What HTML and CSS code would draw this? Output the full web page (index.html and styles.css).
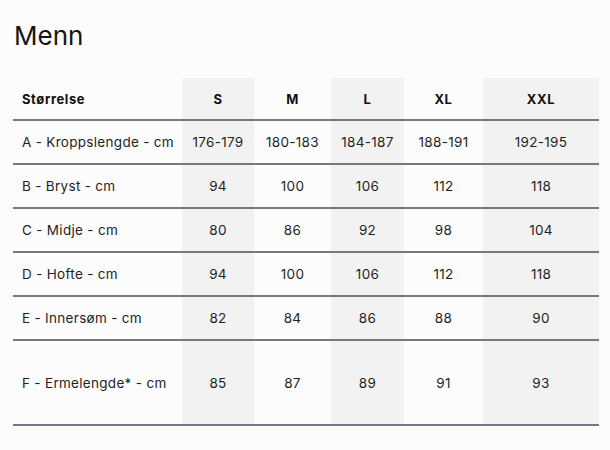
FILE: index.html
```html
<!DOCTYPE html>
<html lang="no">
<head>
<meta charset="utf-8">
<title>Menn</title>
<link rel="stylesheet" href="styles.css">
</head>
<body>
<main class="page">
  <h1 class="title">Menn</h1>
  <table class="sizes">
    <colgroup>
      <col class="c-label">
      <col class="c-s shade">
      <col class="c-m">
      <col class="c-l shade">
      <col class="c-xl">
      <col class="c-xxl shade">
    </colgroup>
    <thead>
      <tr>
        <th class="label">Størrelse</th>
        <th>S</th>
        <th>M</th>
        <th>L</th>
        <th>XL</th>
        <th>XXL</th>
      </tr>
    </thead>
    <tbody>
      <tr><td class="label">A - Kroppslengde - cm</td><td>176-179</td><td>180-183</td><td>184-187</td><td>188-191</td><td>192-195</td></tr>
      <tr><td class="label">B - Bryst - cm</td><td>94</td><td>100</td><td>106</td><td>112</td><td>118</td></tr>
      <tr><td class="label">C - Midje - cm</td><td>80</td><td>86</td><td>92</td><td>98</td><td>104</td></tr>
      <tr><td class="label">D - Hofte - cm</td><td>94</td><td>100</td><td>106</td><td>112</td><td>118</td></tr>
      <tr><td class="label">E - Innersøm - cm</td><td>82</td><td>84</td><td>86</td><td>88</td><td>90</td></tr>
      <tr class="tall"><td class="label">F - Ermelengde* - cm</td><td>85</td><td>87</td><td>89</td><td>91</td><td>93</td></tr>
    </tbody>
  </table>
</main>
</body>
</html>
```
FILE: styles.css
```css
html, body {
  margin: 0;
  padding: 0;
  background: #fcfcfc;
}
body {
  font-family: Inter, "Noto Sans", sans-serif;
  color: #1f1f1f;
}
.page {
  padding: 20px 11px 0 13px;
}
.title {
  margin: 0 0 0 1px;
  font-size: 26px;
  font-weight: 400;
  line-height: 32px;
  color: #151515;
}
.sizes {
  margin-top: 26px;
  border-collapse: collapse;
  width: 586px;
  table-layout: fixed;
  font-size: 13.5px;
  letter-spacing: 0.3px;
}
.c-label { width: 169px; }
.c-s { width: 72px; }
.c-m { width: 77px; }
.c-l { width: 73px; }
.c-xl { width: 79px; }
.c-xxl { width: 116px; }
.shade { background: #f2f2f2; }
.sizes th, .sizes td {
  padding: 0;
  text-align: center;
  border-bottom: 2px solid #707b88;
}
.sizes th {
  height: 41px;
  font-weight: 700;
  font-size: 13px;
  letter-spacing: 0.6px;
  color: #111;
}
.sizes td {
  height: 42px;
}
.sizes .label {
  text-align: left;
  padding-left: 9px;
}
.sizes .tall td {
  height: 83px;
}
```
